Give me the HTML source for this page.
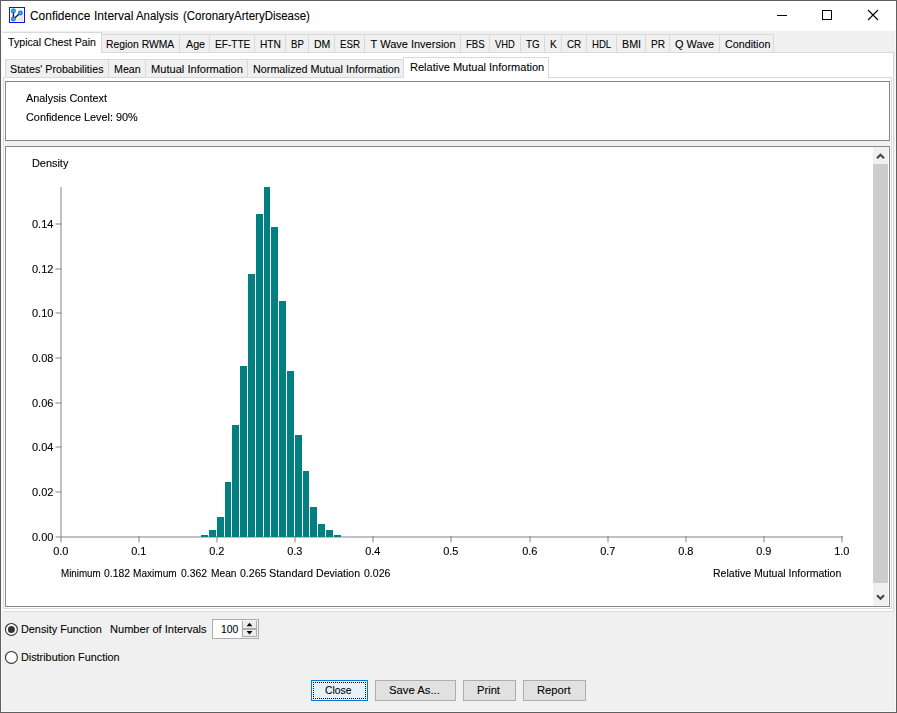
<!DOCTYPE html>
<html><head><meta charset="utf-8"><title>Confidence Interval Analysis</title>
<style>
html,body{margin:0;padding:0;}
body{width:897px;height:713px;position:relative;overflow:hidden;background:#f0f0f0;font-family:"Liberation Sans",sans-serif;font-size:11px;color:#000;-webkit-text-stroke:0.08px #000;}
div,span{box-sizing:border-box;}
</style></head><body>
<div style="position:absolute;left:0px;top:0px;width:897px;height:713px;background:#f0f0f0;border:1px solid #5f5f5f;box-sizing:border-box;"></div>
<div style="position:absolute;left:1px;top:1px;width:895px;height:711px;border:1px solid #f8f8f8;box-sizing:border-box;"></div>
<div style="position:absolute;left:1px;top:1px;width:895px;height:30px;background:#ffffff;"></div>
<svg style="position:absolute;left:9px;top:7px" width="17" height="17" viewBox="0 0 17 17">
<defs><linearGradient id="ig" x1="0" y1="0" x2="1" y2="1"><stop offset="0" stop-color="#ffffff"/><stop offset="0.55" stop-color="#f6f6f6"/><stop offset="1" stop-color="#d4d4d4"/></linearGradient>
<radialGradient id="cg"><stop offset="0" stop-color="#1fc0ea"/><stop offset="0.45" stop-color="#1fb0f0"/><stop offset="0.8" stop-color="#1a5cff"/><stop offset="1" stop-color="#1a40ff"/></radialGradient></defs>
<rect x="0.5" y="0.5" width="15" height="15" fill="url(#ig)" stroke="#0c14f4" stroke-width="1"/>
<rect x="1.5" y="1.5" width="13" height="13" fill="none" stroke="#fffbe6" stroke-width="1" opacity="0.8"/>
<path d="M4.4 4 L4.4 12 L11.4 6" fill="none" stroke="#111" stroke-width="1.3"/>
<circle cx="4.4" cy="3.9" r="2.4" fill="url(#cg)"/>
<circle cx="4.4" cy="12" r="2.4" fill="url(#cg)"/>
<circle cx="11.4" cy="6" r="2.4" fill="url(#cg)"/>
</svg>
<span id="title0" style="position:absolute;left:30.23px;top:7.84px;font-size:12px;line-height:16px;color:#000;white-space:nowrap;display:inline-block;transform-origin:0 50%;transform:scaleX(0.9938);">Confidence</span>
<span id="title1" style="position:absolute;left:93.88px;top:7.84px;font-size:12px;line-height:16px;color:#000;white-space:nowrap;display:inline-block;transform-origin:0 50%;transform:scaleX(1.0037);">Interval</span>
<span id="title2" style="position:absolute;left:136.30px;top:7.84px;font-size:12px;line-height:16px;color:#000;white-space:nowrap;display:inline-block;transform-origin:0 50%;transform:scaleX(0.9520);">Analysis</span>
<span id="title3" style="position:absolute;left:182.65px;top:7.84px;font-size:12px;line-height:16px;color:#000;white-space:nowrap;display:inline-block;transform-origin:0 50%;transform:scaleX(0.9566);">(CoronaryArteryDisease)</span>
<div style="position:absolute;left:777px;top:15px;width:10px;height:1px;background:#000;"></div>
<div style="position:absolute;left:822px;top:10px;width:10px;height:10px;border:1px solid #000;box-sizing:border-box;"></div>
<svg style="position:absolute;left:867px;top:9px" width="12" height="12" viewBox="0 0 12 12"><path d="M1 1 L11 11 M11 1 L1 11" stroke="#000" stroke-width="1.1" fill="none"/></svg>
<div style="position:absolute;left:2px;top:52px;width:892px;height:560px;background:#ffffff;border:1px solid #d9d9d9;box-sizing:border-box;border-left-color:#fff;"></div>
<div style="position:absolute;left:2px;top:32px;width:100px;height:21px;background:#ffffff;border:1px solid #d9d9d9;box-sizing:border-box;border-bottom:none;border-left-color:#fff;"></div>
<span id="r1_0" style="position:absolute;left:8.01px;top:34.19px;font-size:11px;line-height:16px;color:#000;white-space:nowrap;display:inline-block;transform-origin:0 50%;transform:scaleX(0.9661);">Typical Chest Pain</span>
<div style="position:absolute;left:101px;top:34px;width:79px;height:19px;background:#f0f0f0;border:1px solid #d9d9d9;box-sizing:border-box;"></div>
<span id="r1_1" style="position:absolute;left:105.61px;top:36.19px;font-size:11px;line-height:16px;color:#000;white-space:nowrap;display:inline-block;transform-origin:0 50%;transform:scaleX(0.9401);">Region RWMA</span>
<div style="position:absolute;left:179px;top:34px;width:31px;height:19px;background:#f0f0f0;border:1px solid #d9d9d9;box-sizing:border-box;"></div>
<span id="r1_2" style="position:absolute;left:185.80px;top:36.19px;font-size:11px;line-height:16px;color:#000;white-space:nowrap;display:inline-block;transform-origin:0 50%;transform:scaleX(0.9738);">Age</span>
<div style="position:absolute;left:209px;top:34px;width:46px;height:19px;background:#f0f0f0;border:1px solid #d9d9d9;box-sizing:border-box;"></div>
<span id="r1_3" style="position:absolute;left:214.66px;top:36.19px;font-size:11px;line-height:16px;color:#000;white-space:nowrap;display:inline-block;transform-origin:0 50%;transform:scaleX(0.9162);">EF-TTE</span>
<div style="position:absolute;left:254px;top:34px;width:32px;height:19px;background:#f0f0f0;border:1px solid #d9d9d9;box-sizing:border-box;"></div>
<span id="r1_4" style="position:absolute;left:259.94px;top:36.19px;font-size:11px;line-height:16px;color:#000;white-space:nowrap;display:inline-block;transform-origin:0 50%;transform:scaleX(0.9262);">HTN</span>
<div style="position:absolute;left:285px;top:34px;width:24px;height:19px;background:#f0f0f0;border:1px solid #d9d9d9;box-sizing:border-box;"></div>
<span id="r1_5" style="position:absolute;left:290.68px;top:36.19px;font-size:11px;line-height:16px;color:#000;white-space:nowrap;display:inline-block;transform-origin:0 50%;transform:scaleX(0.8704);">BP</span>
<div style="position:absolute;left:308px;top:34px;width:27px;height:19px;background:#f0f0f0;border:1px solid #d9d9d9;box-sizing:border-box;"></div>
<span id="r1_6" style="position:absolute;left:313.87px;top:36.19px;font-size:11px;line-height:16px;color:#000;white-space:nowrap;display:inline-block;transform-origin:0 50%;transform:scaleX(0.9574);">DM</span>
<div style="position:absolute;left:334px;top:34px;width:31px;height:19px;background:#f0f0f0;border:1px solid #d9d9d9;box-sizing:border-box;"></div>
<span id="r1_7" style="position:absolute;left:339.88px;top:36.19px;font-size:11px;line-height:16px;color:#000;white-space:nowrap;display:inline-block;transform-origin:0 50%;transform:scaleX(0.8888);">ESR</span>
<div style="position:absolute;left:364px;top:34px;width:97px;height:19px;background:#f0f0f0;border:1px solid #d9d9d9;box-sizing:border-box;"></div>
<span id="r1_8" style="position:absolute;left:370.60px;top:36.19px;font-size:11px;line-height:16px;color:#000;white-space:nowrap;display:inline-block;transform-origin:0 50%;transform:scaleX(1.0000);">T Wave Inversion</span>
<div style="position:absolute;left:460px;top:34px;width:30px;height:19px;background:#f0f0f0;border:1px solid #d9d9d9;box-sizing:border-box;"></div>
<span id="r1_9" style="position:absolute;left:466.02px;top:36.19px;font-size:11px;line-height:16px;color:#000;white-space:nowrap;display:inline-block;transform-origin:0 50%;transform:scaleX(0.8741);">FBS</span>
<div style="position:absolute;left:489px;top:34px;width:32px;height:19px;background:#f0f0f0;border:1px solid #d9d9d9;box-sizing:border-box;"></div>
<span id="r1_10" style="position:absolute;left:495.32px;top:36.19px;font-size:11px;line-height:16px;color:#000;white-space:nowrap;display:inline-block;transform-origin:0 50%;transform:scaleX(0.8496);">VHD</span>
<div style="position:absolute;left:520px;top:34px;width:25px;height:19px;background:#f0f0f0;border:1px solid #d9d9d9;box-sizing:border-box;"></div>
<span id="r1_11" style="position:absolute;left:525.86px;top:36.19px;font-size:11px;line-height:16px;color:#000;white-space:nowrap;display:inline-block;transform-origin:0 50%;transform:scaleX(0.8967);">TG</span>
<div style="position:absolute;left:544px;top:34px;width:18px;height:19px;background:#f0f0f0;border:1px solid #d9d9d9;box-sizing:border-box;"></div>
<span id="r1_12" style="position:absolute;left:549.93px;top:36.19px;font-size:11px;line-height:16px;color:#000;white-space:nowrap;display:inline-block;transform-origin:0 50%;transform:scaleX(0.9233);">K</span>
<div style="position:absolute;left:561px;top:34px;width:26px;height:19px;background:#f0f0f0;border:1px solid #d9d9d9;box-sizing:border-box;"></div>
<span id="r1_13" style="position:absolute;left:566.88px;top:36.19px;font-size:11px;line-height:16px;color:#000;white-space:nowrap;display:inline-block;transform-origin:0 50%;transform:scaleX(0.8958);">CR</span>
<div style="position:absolute;left:586px;top:34px;width:31px;height:19px;background:#f0f0f0;border:1px solid #d9d9d9;box-sizing:border-box;"></div>
<span id="r1_14" style="position:absolute;left:591.68px;top:36.19px;font-size:11px;line-height:16px;color:#000;white-space:nowrap;display:inline-block;transform-origin:0 50%;transform:scaleX(0.8732);">HDL</span>
<div style="position:absolute;left:616px;top:34px;width:30px;height:19px;background:#f0f0f0;border:1px solid #d9d9d9;box-sizing:border-box;"></div>
<span id="r1_15" style="position:absolute;left:622.02px;top:36.19px;font-size:11px;line-height:16px;color:#000;white-space:nowrap;display:inline-block;transform-origin:0 50%;transform:scaleX(0.9733);">BMI</span>
<div style="position:absolute;left:645px;top:34px;width:25px;height:19px;background:#f0f0f0;border:1px solid #d9d9d9;box-sizing:border-box;"></div>
<span id="r1_16" style="position:absolute;left:651.07px;top:36.19px;font-size:11px;line-height:16px;color:#000;white-space:nowrap;display:inline-block;transform-origin:0 50%;transform:scaleX(0.9172);">PR</span>
<div style="position:absolute;left:669px;top:34px;width:51px;height:19px;background:#f0f0f0;border:1px solid #d9d9d9;box-sizing:border-box;"></div>
<span id="r1_17" style="position:absolute;left:675.28px;top:36.19px;font-size:11px;line-height:16px;color:#000;white-space:nowrap;display:inline-block;transform-origin:0 50%;transform:scaleX(0.9917);">Q Wave</span>
<div style="position:absolute;left:719px;top:34px;width:55px;height:19px;background:#f0f0f0;border:1px solid #d9d9d9;box-sizing:border-box;"></div>
<span id="r1_18" style="position:absolute;left:725.29px;top:36.19px;font-size:11px;line-height:16px;color:#000;white-space:nowrap;display:inline-block;transform-origin:0 50%;transform:scaleX(0.9758);">Condition</span>
<div style="position:absolute;left:3px;top:77px;width:889px;height:532px;background:#ffffff;border:1px solid #d9d9d9;box-sizing:border-box;"></div>
<div style="position:absolute;left:5px;top:59px;width:104px;height:19px;background:#f0f0f0;border:1px solid #d9d9d9;box-sizing:border-box;"></div>
<span id="r2_0" style="position:absolute;left:9.84px;top:61.19px;font-size:11px;line-height:16px;color:#000;white-space:nowrap;display:inline-block;transform-origin:0 50%;transform:scaleX(0.9713);">States' Probabilities</span>
<div style="position:absolute;left:108px;top:59px;width:38px;height:19px;background:#f0f0f0;border:1px solid #d9d9d9;box-sizing:border-box;"></div>
<span id="r2_1" style="position:absolute;left:113.87px;top:61.19px;font-size:11px;line-height:16px;color:#000;white-space:nowrap;display:inline-block;transform-origin:0 50%;transform:scaleX(0.9699);">Mean</span>
<div style="position:absolute;left:145px;top:59px;width:103px;height:19px;background:#f0f0f0;border:1px solid #d9d9d9;box-sizing:border-box;"></div>
<span id="r2_2" style="position:absolute;left:150.68px;top:61.19px;font-size:11px;line-height:16px;color:#000;white-space:nowrap;display:inline-block;transform-origin:0 50%;transform:scaleX(1.0088);">Mutual Information</span>
<div style="position:absolute;left:247px;top:59px;width:157px;height:19px;background:#f0f0f0;border:1px solid #d9d9d9;box-sizing:border-box;"></div>
<span id="r2_3" style="position:absolute;left:253.06px;top:61.19px;font-size:11px;line-height:16px;color:#000;white-space:nowrap;display:inline-block;transform-origin:0 50%;transform:scaleX(0.9805);">Normalized Mutual Information</span>
<div style="position:absolute;left:403px;top:57px;width:146px;height:21px;background:#ffffff;border:1px solid #d9d9d9;box-sizing:border-box;border-bottom:none;"></div>
<span id="r2_4" style="position:absolute;left:409.92px;top:59.19px;font-size:11px;line-height:16px;color:#000;white-space:nowrap;display:inline-block;transform-origin:0 50%;transform:scaleX(1.0023);">Relative Mutual Information</span>
<div style="position:absolute;left:5px;top:81px;width:885px;height:60px;background:#ffffff;border:1px solid #828790;box-sizing:border-box;"></div>
<div style="position:absolute;left:5px;top:141px;width:885px;height:5px;background:#f0f0f0;"></div>
<div style="position:absolute;left:5px;top:146px;width:885px;height:461px;background:#ffffff;border:1px solid #828790;box-sizing:border-box;"></div>
<div style="position:absolute;left:873px;top:147px;width:15px;height:459px;background:#f0f0f0;"></div>
<div style="position:absolute;left:873px;top:164px;width:15px;height:419px;background:#cdcdcd;"></div>
<svg style="position:absolute;left:873px;top:147px" width="15" height="17" viewBox="0 0 15 17"><path d="M4 11.2 L7.5 7.7 L11 11.2" fill="none" stroke="#484848" stroke-width="2.2"/></svg>
<svg style="position:absolute;left:873px;top:589px" width="15" height="17" viewBox="0 0 15 17"><path d="M4 6.3 L7.5 9.8 L11 6.3" fill="none" stroke="#484848" stroke-width="2.2"/></svg>
<svg style="position:absolute;left:0;top:0" width="897" height="713" viewBox="0 0 897 713"><g><rect x="60" y="187" width="2" height="351" fill="rgba(128,128,128,0.49)"/><rect x="61" y="536" width="782" height="2" fill="rgba(128,128,128,0.49)"/><rect x="55.5" y="491" width="6" height="2" fill="rgba(128,128,128,0.49)"/><rect x="55.5" y="446" width="6" height="2" fill="rgba(128,128,128,0.49)"/><rect x="55.5" y="402" width="6" height="2" fill="rgba(128,128,128,0.49)"/><rect x="55.5" y="357" width="6" height="2" fill="rgba(128,128,128,0.49)"/><rect x="55.5" y="312" width="6" height="2" fill="rgba(128,128,128,0.49)"/><rect x="55.5" y="268" width="6" height="2" fill="rgba(128,128,128,0.49)"/><rect x="55.5" y="223" width="6" height="2" fill="rgba(128,128,128,0.49)"/><rect x="55.5" y="536" width="5.5" height="2" fill="rgba(128,128,128,0.49)"/><rect x="60" y="538" width="2" height="4.4" fill="rgba(128,128,128,0.49)"/><rect x="138" y="536" width="2" height="6.4" fill="rgba(128,128,128,0.49)"/><rect x="216" y="536" width="2" height="6.4" fill="rgba(128,128,128,0.49)"/><rect x="294" y="536" width="2" height="6.4" fill="rgba(128,128,128,0.49)"/><rect x="372" y="536" width="2" height="6.4" fill="rgba(128,128,128,0.49)"/><rect x="450" y="536" width="2" height="6.4" fill="rgba(128,128,128,0.49)"/><rect x="529" y="536" width="2" height="6.4" fill="rgba(128,128,128,0.49)"/><rect x="607" y="536" width="2" height="6.4" fill="rgba(128,128,128,0.49)"/><rect x="685" y="536" width="2" height="6.4" fill="rgba(128,128,128,0.49)"/><rect x="763" y="536" width="2" height="6.4" fill="rgba(128,128,128,0.49)"/><rect x="841" y="536" width="2" height="6.4" fill="rgba(128,128,128,0.49)"/><rect x="201" y="535" width="7" height="2" fill="#008080"/><rect x="209" y="530" width="7" height="7" fill="#008080"/><rect x="217" y="517" width="7" height="20" fill="#008080"/><rect x="225" y="482" width="6" height="55" fill="#008080"/><rect x="232" y="425" width="7" height="112" fill="#008080"/><rect x="240" y="366" width="7" height="171" fill="#008080"/><rect x="248" y="274" width="7" height="263" fill="#008080"/><rect x="256" y="214" width="7" height="323" fill="#008080"/><rect x="264" y="187" width="6" height="350" fill="#008080"/><rect x="271" y="227" width="7" height="310" fill="#008080"/><rect x="279" y="301" width="7" height="236" fill="#008080"/><rect x="287" y="371" width="7" height="166" fill="#008080"/><rect x="295" y="435" width="7" height="102" fill="#008080"/><rect x="303" y="471" width="6" height="66" fill="#008080"/><rect x="310" y="507" width="7" height="30" fill="#008080"/><rect x="318" y="524" width="7" height="13" fill="#008080"/><rect x="326" y="530" width="7" height="7" fill="#008080"/><rect x="334" y="535" width="7" height="2" fill="#008080"/></g></svg>
<svg style="position:absolute;left:3px;top:621px" width="16" height="16" viewBox="0 0 16 16"><circle cx="8.40" cy="8.45" r="5.95" fill="#fff" stroke="#333" stroke-width="1.1"/><circle cx="8.40" cy="8.45" r="3.5" fill="#333"/></svg>
<svg style="position:absolute;left:3px;top:649px" width="16" height="16" viewBox="0 0 16 16"><circle cx="8.40" cy="8.40" r="5.95" fill="#fff" stroke="#333" stroke-width="1.1"/></svg>
<span id="rb1" style="position:absolute;left:20.93px;top:621.19px;font-size:11px;line-height:16px;color:#000;white-space:nowrap;display:inline-block;transform-origin:0 50%;transform:scaleX(0.9852);">Density Function</span>
<span id="rb2" style="position:absolute;left:20.93px;top:649.19px;font-size:11px;line-height:16px;color:#000;white-space:nowrap;display:inline-block;transform-origin:0 50%;transform:scaleX(0.9830);">Distribution Function</span>
<span id="nint" style="position:absolute;left:110.09px;top:621.19px;font-size:11px;line-height:16px;color:#000;white-space:nowrap;display:inline-block;transform-origin:0 50%;transform:scaleX(1.0063);">Number of Intervals</span>
<div style="position:absolute;left:212px;top:619px;width:47px;height:20px;background:#f0f0f0;border:1px solid #adadad;box-sizing:border-box;"></div>
<div style="position:absolute;left:213px;top:620px;width:28px;height:18px;background:#ffffff;"></div>
<span id="spv" style="position:absolute;left:220.98px;top:621.19px;font-size:11px;line-height:16px;color:#000;white-space:nowrap;display:inline-block;transform-origin:0 50%;transform:scaleX(0.9419);">100</span>
<div style="position:absolute;left:242px;top:621px;width:15px;height:16px;background:#ebebeb;border:1px solid #adadad;box-sizing:border-box;border-top:none;"></div>
<div style="position:absolute;left:243px;top:628px;width:13px;height:2px;background:#adadad;"></div>
<svg style="position:absolute;left:242px;top:619px" width="15" height="20" viewBox="0 0 15 20"><path d="M4.6 7.2 L7.5 3.8 L10.4 7.2 Z" fill="#000"/><path d="M4.6 12 L7.5 15.4 L10.4 12 Z" fill="#000"/></svg>
<div style="position:absolute;left:311px;top:680px;width:57px;height:21px;background:#e5f1fb;border:1px solid #0078d7;box-sizing:border-box;"></div><div style="position:absolute;left:313px;top:682px;width:53px;height:17px;border:1px dotted #000;box-sizing:border-box;"></div><span id="b1" style="position:absolute;left:325.08px;top:682.19px;font-size:11px;line-height:16px;color:#000;white-space:nowrap;display:inline-block;transform-origin:0 50%;transform:scaleX(0.9395);">Close</span>
<div style="position:absolute;left:375px;top:680px;width:81px;height:21px;background:#e1e1e1;border:1px solid #adadad;box-sizing:border-box;"></div><span id="b2" style="position:absolute;left:389.02px;top:682.19px;font-size:11px;line-height:16px;color:#000;white-space:nowrap;display:inline-block;transform-origin:0 50%;transform:scaleX(1.0272);">Save As...</span>
<div style="position:absolute;left:463px;top:680px;width:53px;height:21px;background:#e1e1e1;border:1px solid #adadad;box-sizing:border-box;"></div><span id="b3" style="position:absolute;left:476.89px;top:682.19px;font-size:11px;line-height:16px;color:#000;white-space:nowrap;display:inline-block;transform-origin:0 50%;transform:scaleX(1.0157);">Print</span>
<div style="position:absolute;left:523px;top:680px;width:63px;height:21px;background:#e1e1e1;border:1px solid #adadad;box-sizing:border-box;"></div><span id="b4" style="position:absolute;left:537.07px;top:682.19px;font-size:11px;line-height:16px;color:#000;white-space:nowrap;display:inline-block;transform-origin:0 50%;transform:scaleX(1.0194);">Report</span>
<div style="position:absolute;left:0;top:0;width:897px;height:713px;will-change:transform;opacity:0.999;-webkit-text-stroke:0.12px #000">
<span id="ctx1" style="position:absolute;left:26.00px;top:90.19px;font-size:11px;line-height:16px;color:#000;white-space:nowrap;display:inline-block;transform-origin:0 50%;transform:scaleX(0.9881);">Analysis Context</span>
<span id="ctx2" style="position:absolute;left:25.88px;top:109.19px;font-size:11px;line-height:16px;color:#000;white-space:nowrap;display:inline-block;transform-origin:0 50%;transform:scaleX(0.9880);">Confidence Level: 90%</span>
<span id="dens" style="position:absolute;left:31.73px;top:155.19px;font-size:11px;line-height:16px;color:#000;white-space:nowrap;display:inline-block;transform-origin:0 50%;transform:scaleX(0.9911);">Density</span>
<span id="yl0.00" style="position:absolute;right:843.60px;top:529.19px;font-size:11px;line-height:16px;color:#000;white-space:nowrap;display:inline-block;transform-origin:0 50%;transform:scaleX(1.0000);">0.00</span>
<span id="yl0.02" style="position:absolute;right:843.60px;top:484.19px;font-size:11px;line-height:16px;color:#000;white-space:nowrap;display:inline-block;transform-origin:0 50%;transform:scaleX(1.0000);">0.02</span>
<span id="yl0.04" style="position:absolute;right:843.60px;top:439.19px;font-size:11px;line-height:16px;color:#000;white-space:nowrap;display:inline-block;transform-origin:0 50%;transform:scaleX(1.0000);">0.04</span>
<span id="yl0.06" style="position:absolute;right:843.60px;top:395.19px;font-size:11px;line-height:16px;color:#000;white-space:nowrap;display:inline-block;transform-origin:0 50%;transform:scaleX(1.0000);">0.06</span>
<span id="yl0.08" style="position:absolute;right:843.60px;top:350.19px;font-size:11px;line-height:16px;color:#000;white-space:nowrap;display:inline-block;transform-origin:0 50%;transform:scaleX(1.0000);">0.08</span>
<span id="yl0.10" style="position:absolute;right:843.60px;top:305.19px;font-size:11px;line-height:16px;color:#000;white-space:nowrap;display:inline-block;transform-origin:0 50%;transform:scaleX(1.0000);">0.10</span>
<span id="yl0.12" style="position:absolute;right:843.60px;top:261.19px;font-size:11px;line-height:16px;color:#000;white-space:nowrap;display:inline-block;transform-origin:0 50%;transform:scaleX(1.0000);">0.12</span>
<span id="yl0.14" style="position:absolute;right:843.60px;top:216.19px;font-size:11px;line-height:16px;color:#000;white-space:nowrap;display:inline-block;transform-origin:0 50%;transform:scaleX(1.0000);">0.14</span>
<span id="xl0" style="position:absolute;left:-139.20px;width:400px;text-align:center;top:543.19px;font-size:11px;line-height:16px;color:#000;white-space:nowrap;display:inline-block;transform-origin:0 50%;transform:scaleX(1.0000);">0.0</span>
<span id="xl1" style="position:absolute;left:-61.20px;width:400px;text-align:center;top:543.19px;font-size:11px;line-height:16px;color:#000;white-space:nowrap;display:inline-block;transform-origin:0 50%;transform:scaleX(1.0000);">0.1</span>
<span id="xl2" style="position:absolute;left:16.80px;width:400px;text-align:center;top:543.19px;font-size:11px;line-height:16px;color:#000;white-space:nowrap;display:inline-block;transform-origin:0 50%;transform:scaleX(1.0000);">0.2</span>
<span id="xl3" style="position:absolute;left:94.80px;width:400px;text-align:center;top:543.19px;font-size:11px;line-height:16px;color:#000;white-space:nowrap;display:inline-block;transform-origin:0 50%;transform:scaleX(1.0000);">0.3</span>
<span id="xl4" style="position:absolute;left:172.80px;width:400px;text-align:center;top:543.19px;font-size:11px;line-height:16px;color:#000;white-space:nowrap;display:inline-block;transform-origin:0 50%;transform:scaleX(1.0000);">0.4</span>
<span id="xl5" style="position:absolute;left:250.80px;width:400px;text-align:center;top:543.19px;font-size:11px;line-height:16px;color:#000;white-space:nowrap;display:inline-block;transform-origin:0 50%;transform:scaleX(1.0000);">0.5</span>
<span id="xl6" style="position:absolute;left:329.80px;width:400px;text-align:center;top:543.19px;font-size:11px;line-height:16px;color:#000;white-space:nowrap;display:inline-block;transform-origin:0 50%;transform:scaleX(1.0000);">0.6</span>
<span id="xl7" style="position:absolute;left:407.80px;width:400px;text-align:center;top:543.19px;font-size:11px;line-height:16px;color:#000;white-space:nowrap;display:inline-block;transform-origin:0 50%;transform:scaleX(1.0000);">0.7</span>
<span id="xl8" style="position:absolute;left:485.80px;width:400px;text-align:center;top:543.19px;font-size:11px;line-height:16px;color:#000;white-space:nowrap;display:inline-block;transform-origin:0 50%;transform:scaleX(1.0000);">0.8</span>
<span id="xl9" style="position:absolute;left:563.80px;width:400px;text-align:center;top:543.19px;font-size:11px;line-height:16px;color:#000;white-space:nowrap;display:inline-block;transform-origin:0 50%;transform:scaleX(1.0000);">0.9</span>
<span id="xl10" style="position:absolute;left:641.80px;width:400px;text-align:center;top:543.19px;font-size:11px;line-height:16px;color:#000;white-space:nowrap;display:inline-block;transform-origin:0 50%;transform:scaleX(1.0000);">1.0</span>
<span id="st0" style="position:absolute;left:60.50px;top:565.19px;font-size:11px;line-height:16px;color:#000;white-space:nowrap;display:inline-block;transform-origin:0 50%;transform:scaleX(0.8897);">Minimum</span>
<span id="st1" style="position:absolute;left:103.80px;top:565.19px;font-size:11px;line-height:16px;color:#000;white-space:nowrap;display:inline-block;transform-origin:0 50%;transform:scaleX(0.9468);">0.182</span>
<span id="st2" style="position:absolute;left:132.95px;top:565.19px;font-size:11px;line-height:16px;color:#000;white-space:nowrap;display:inline-block;transform-origin:0 50%;transform:scaleX(0.9158);">Maximum</span>
<span id="st3" style="position:absolute;left:180.91px;top:565.19px;font-size:11px;line-height:16px;color:#000;white-space:nowrap;display:inline-block;transform-origin:0 50%;transform:scaleX(0.9442);">0.362</span>
<span id="st4" style="position:absolute;left:211.09px;top:565.19px;font-size:11px;line-height:16px;color:#000;white-space:nowrap;display:inline-block;transform-origin:0 50%;transform:scaleX(0.9253);">Mean</span>
<span id="st5" style="position:absolute;left:240.24px;top:565.19px;font-size:11px;line-height:16px;color:#000;white-space:nowrap;display:inline-block;transform-origin:0 50%;transform:scaleX(0.9586);">0.265</span>
<span id="st6" style="position:absolute;left:269.34px;top:565.19px;font-size:11px;line-height:16px;color:#000;white-space:nowrap;display:inline-block;transform-origin:0 50%;transform:scaleX(0.9895);">Standard</span>
<span id="st7" style="position:absolute;left:316.17px;top:565.19px;font-size:11px;line-height:16px;color:#000;white-space:nowrap;display:inline-block;transform-origin:0 50%;transform:scaleX(0.9601);">Deviation</span>
<span id="st8" style="position:absolute;left:364.10px;top:565.19px;font-size:11px;line-height:16px;color:#000;white-space:nowrap;display:inline-block;transform-origin:0 50%;transform:scaleX(0.9570);">0.026</span>
<span id="xname" style="position:absolute;left:713.42px;top:565.19px;font-size:11px;line-height:16px;color:#000;white-space:nowrap;display:inline-block;transform-origin:0 50%;transform:scaleX(0.9580);">Relative Mutual Information</span>
</div>
</body></html>
